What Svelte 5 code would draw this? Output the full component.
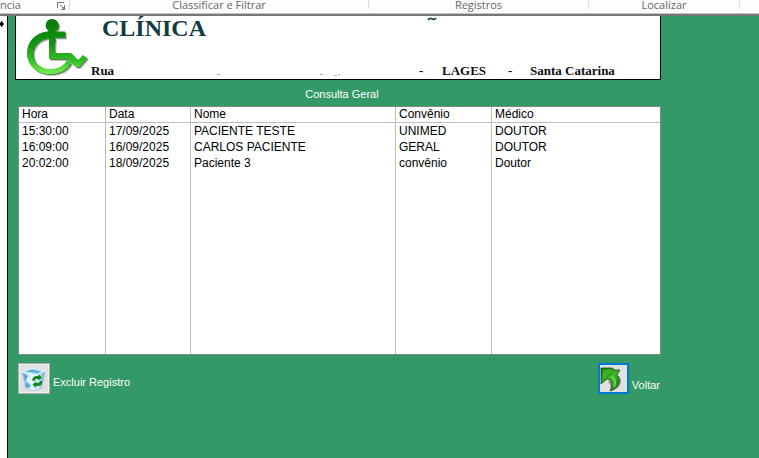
<script>
  const groups = ['Classificar e Filtrar', 'Registros', 'Localizar'];
  const columns = ['Hora', 'Data', 'Nome', 'Convênio', 'Médico'];
  const rows = [
    ['15:30:00', '17/09/2025', 'PACIENTE TESTE', 'UNIMED', 'DOUTOR'],
    ['16:09:00', '16/09/2025', 'CARLOS PACIENTE', 'GERAL', 'DOUTOR'],
    ['20:02:00', '18/09/2025', 'Paciente 3', 'convênio', 'Doutor']
  ];
</script>

<div class="app">
  <header class="ribbon">
    <div class="group first">
      <span>ncia</span>
      <svg width="9" height="8" viewBox="0 0 9 8" fill="none" stroke="#777" shape-rendering="crispEdges">
        <path d="M.5 6V.5H7" />
        <path d="M3 3l3 3" shape-rendering="auto" />
        <path d="M7.500 3v4.500H3.500M5.500 6.500h2M6.500 5v2" />
      </svg>
    </div>
    {#each groups as group}
      <div class="group">{group}</div>
    {/each}
  </header>

  <div class="workspace">
    <aside class="selector">
      <svg width="4" height="8" viewBox="0 0 4 8"><path d="M0 2.500h1V.500L4 4 1 7.500v-2H0z" fill="#000" /></svg>
    </aside>

    <main class="form">
      <section class="banner">
        <svg class="logo" width="64" height="58" viewBox="0 0 64 58">
          <defs>
            <linearGradient id="green" x1="0" y1="0" x2="0" y2="1">
              <stop offset="0" stop-color="#087c08" />
              <stop offset=".45" stop-color="#12950f" />
              <stop offset=".75" stop-color="#32bd25" />
              <stop offset="1" stop-color="#7af052" />
            </linearGradient>
            <path id="chair" d="M25 0a6.400 6.400 0 0 1 3 12v.5h10v6H28v4.500h-.5v11H44l7 7 5-5 4 3-8 9h-3l-9-8H22V19C12 20 6 27 6 35c0 8 7 15 17 15 8 0 14-3 17-9l4 3c-4 7-11 11-21 11C9 55 0 46 0 34 0 22 9 14 20 12.500L22 12A6.400 6.400 0 0 1 25 0z" />
          </defs>
          <use href="#chair" x="2" y="2" fill="#777" opacity=".45" />
          <use href="#chair" x="1" y="1" fill="#1d6a1d" opacity=".7" />
          <use href="#chair" fill="url(#green)" />
        </svg>
        <div class="heading">
          <div class="title">
            <h1>CLÍNICA</h1>
            <svg width="10" height="4" viewBox="0 0 10 4"><path d="M1 3.200Q2.500.5 5 1.800T9 1" fill="none" stroke="#174545" stroke-width="1.700" /></svg>
          </div>
          <div class="address">
            <span>Rua</span>
            <svg width="80" height="2" viewBox="0 0 80 2" fill="#aaa"><path d="M0 0h3v1H0zM103 0h3v1h-3zM117 1h3v1h-3zM121 0h2v1h-2z" /></svg>
            <span>-</span><span>LAGES</span><span>-</span><span>Santa Catarina</span>
          </div>
        </div>
      </section>

      <h2>Consulta Geral</h2>

      <div class="list">
        <table aria-label="Consulta Geral">
          <colgroup><col class="hour" /><col class="date" /><col class="name" /><col class="plan" /><col /></colgroup>
          <thead>
            <tr>{#each columns as column}<th scope="col">{column}</th>{/each}</tr>
          </thead>
          <tbody>
            {#each rows as row}
              <tr>{#each row as cell}<td>{cell}</td>{/each}</tr>
            {/each}
            <tr class="rest" aria-hidden="true">{#each columns as _}<td></td>{/each}</tr>
          </tbody>
        </table>
      </div>

      <footer>
        <div class="action">
          <button id="remove" class="remove" aria-label="Excluir Registro">
            <svg width="26" height="26" viewBox="0 0 26 26">
              <defs><linearGradient id="bin" x1="0" x2="1"><stop offset="0" stop-color="#8fcbee" /><stop offset=".4" stop-color="#e6f6fd" /><stop offset=".75" stop-color="#c4e4f4" /><stop offset="1" stop-color="#6f9cc0" /></linearGradient></defs>
              <path d="M1 6l9-4 14 3-3 17-8 3-8-3z" fill="url(#bin)" stroke="#a2c4d8" stroke-width=".7" />
              <path d="M1 6l9-4 14 3-8 4z" fill="#a9d8f2" stroke="#e9faff" />
              <path d="M5 5.500l6-2 9 2-4 1.500z" fill="#5faade" />
              <path d="M2 7l5 3-3 6zM4 18l3-3 3 6-5 1z" fill="#4299d6" opacity=".8" />
              <path d="M6 11l3 2-2 6z" fill="#fff" opacity=".8" />
              <path d="M11.500 15v-2.500q1-2.500 4-2.500h2V8l3.500 3.500-3.500 3V13H15q-1 0-1.500 2zM21 15v2.500q-1 2.500-4 2.500h-2v2l-3.500-3.500 3.500-3V17h2q1.500 0 2-2z" fill="#0c8a20" />
            </svg>
          </button>
          <label for="remove">Excluir Registro</label>
        </div>
        <div class="action back-action">
          <button id="back" class="back" aria-label="Voltar">
            <svg width="26" height="26" viewBox="0 0 26 26">
              <defs><linearGradient id="arrow" x1="0" y1="0" x2="1" y2="1"><stop offset="0" stop-color="#17760f" /><stop offset=".5" stop-color="#3db827" /><stop offset="1" stop-color="#166c14" /></linearGradient></defs>
              <path d="M2 19l6-3q4 4 2 9 10-2 11-9 0-4-2-6z" fill="#555" opacity=".5" />
              <path d="M1 2h11l3 2h5l-3 5q3 3 2 8-2 6-9 8 4-6 0-11l-3-1-6 5z" fill="url(#arrow)" stroke="#1c4a18" stroke-width=".8" />
              <path d="M3 4h9L3 14z" fill="#4cb832" opacity=".7" />
              <path d="M11 10q6 4 3 11" fill="none" stroke="#6bd84c" stroke-width="2" />
            </svg>
          </button>
          <label for="back">Voltar</label>
        </div>
      </footer>
    </main>
  </div>
</div>

<style>
  :global(body) { margin: 0; background: #339966; }
  .app { display: flex; flex-direction: column; min-height: 100vh; overflow: hidden; font-family: "Liberation Sans", Arial, sans-serif; }
  h1, h2 { margin: 0; font-weight: normal; }
  svg { display: block; flex: none; }

  .ribbon {
    display: grid; grid-template-columns: 70fr 299fr 220fr 151fr 19fr; height: 14px;
    background: #fdfdfd; border-bottom: 2px solid #777; box-shadow: inset 0 -1px #c6c6c6;
    color: #666; font: 11px/12px "Open Sans", "Noto Sans", sans-serif;
  }
  .group { height: 9px; border-right: 1px solid #dcdcdc; text-align: center; line-height: 10px; white-space: nowrap; }
  .first { display: flex; justify-content: space-between; padding-right: 3px; }
  .first svg { margin-top: 2px; }

  .workspace { display: flex; flex: 1; }
  .selector { flex: none; width: 7px; background: #fff; border-right: 1px solid #000; }
  .selector svg { margin-top: 4px; }
  .form { flex: 1; min-width: 0; padding: 0 10px 0 7px; background: #339966; }

  .banner { display: flex; max-width: 644px; height: 63px; background: #fff; border: 1px solid #000; border-top: 0; overflow: hidden; }
  .logo { margin: 3px 0 0 11px; }
  .heading { flex: 1; display: flex; flex-direction: column; justify-content: space-between; color: #111; font-family: "Liberation Serif", "Times New Roman", serif; font-weight: bold; }
  .title { display: grid; grid-template-columns: 325px auto; padding-left: 11px; }
  .title h1 { color: #123c3f; font-size: 24px; font-weight: bold; line-height: 24px; }
  .title svg { margin-top: 1px; }
  .address { display: grid; grid-template-columns: 126px 202px 23px 66px 22px auto; align-items: end; font-size: 13px; line-height: 14px; white-space: nowrap; padding-bottom: 1px; }
  .address svg { margin-bottom: 2px; overflow: visible; }

  h2 { max-width: 646px; margin: 6px 0 4px 4px; color: #fff; font-size: 11px; line-height: 16px; text-align: center; }

  .list { max-width: 641px; margin-left: 3px; background: #fff; border: 1px solid #858585; }
  table { width: 100%; border-collapse: separate; border-spacing: 0; table-layout: fixed; font-size: 12px; line-height: 16px; color: #000; }
  .hour { width: 87px; }
  .date { width: 85px; }
  .name { width: 205px; }
  .plan { width: 96px; }
  th, td { height: 16px; padding: 0 3px; border-right: 1px solid #bdbdbd; text-align: left; font-weight: normal; white-space: nowrap; }
  th { height: 15px; line-height: 15px; border-bottom: 1px solid #bdbdbd; }
  th:last-child, td:last-child { border-right: 0; }
  .rest td { height: 183px; }

  footer { display: flex; justify-content: space-between; max-width: 642px; margin: 8px 0 0 3px; color: #fff; font-size: 11px; }
  .action { display: flex; align-items: center; gap: 3px; }
  .action label { padding-top: 6px; line-height: 14px; }
  .back-action label { padding-top: 12px; }
  button { display: grid; place-items: center; box-sizing: border-box; width: 32px; height: 31px; padding: 0; background: #e1e1e1; border: 1px solid #adadad; }
  .remove { box-shadow: inset 0 0 0 1px #f0f0f0; }
  .back { width: 31px; border: 2px solid #0078d7; }
</style>
